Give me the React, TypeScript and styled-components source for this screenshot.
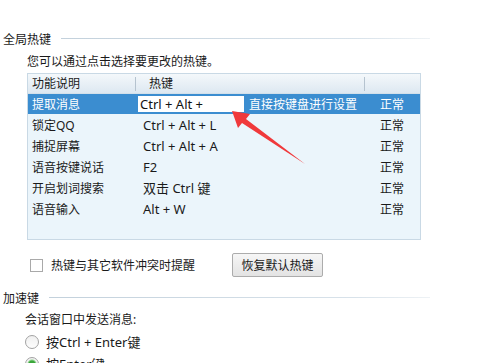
import styled, { createGlobalStyle } from "styled-components";

const GlobalStyle = createGlobalStyle`
  html, body { margin: 0; padding: 0; background: #fff; }
  body {
    width: 482px;
    height: 363px;
    overflow: hidden;
    font-family: "Noto Sans", "Noto Sans CJK SC", sans-serif;
    font-size: 12px;
    color: #1a1a1a;
  }
`;

const Page = styled.div`
  position: relative;
  width: 482px;
  height: 363px;
  padding: 31px 0 0 3px;
  box-sizing: border-box;
`;

const SectionTitle = styled.div<{ $top?: number }>`
  display: flex;
  align-items: center;
  gap: 10px;
  height: 18px;
  margin-top: ${(p) => p.$top ?? 0}px;
  margin-right: 52px;
  line-height: 18px;
`;

const SectionLine = styled.div`
  flex: 1;
  height: 1px;
  margin-top: -4px;
  background: linear-gradient(to right, #c3d1dc, #d8e2ea 80%, #eef2f5);
`;

const Indent = styled.div<{ $left: number }>`
  padding-left: ${(p) => p.$left}px;
`;

const Hint = styled.div`
  height: 18px;
  line-height: 18px;
  margin-top: 4px;
`;

const Table = styled.div`
  width: 394px;
  height: 167px;
  margin-top: 2px;
  box-sizing: border-box;
  border: 1px solid #c9d9e5;
  background: #ebf5fb;
`;

const Grid = styled.div`
  display: grid;
  grid-template-columns: 108px 229px 1fr;
`;

const HeaderRow = styled(Grid)`
  height: 19px;
  background: linear-gradient(to bottom, #f4f8fb, #dde8f1);
  border-bottom: 1px solid #d3e0ea;
  line-height: 19px;
`;

const HeaderCell = styled.div<{ $pad: number; $divider?: boolean }>`
  padding-left: ${(p) => p.$pad}px;
  position: relative;
  &::after {
    content: "";
    display: ${(p) => (p.$divider ? "block" : "none")};
    position: absolute;
    right: 0;
    top: 3px;
    width: 1px;
    height: 14px;
    background: #b5c3cf;
  }
`;

const Row = styled(Grid)<{ $selected?: boolean }>`
  height: ${(p) => (p.$selected ? 20 : 21)}px;
  align-items: center;
  background: ${(p) => (p.$selected ? "#3b8dd0" : "transparent")};
  color: ${(p) => (p.$selected ? "#fff" : "#1a1a1a")};
`;

const Cell = styled.div<{ $pad: number; $latin?: boolean }>`
  padding-left: ${(p) => p.$pad}px;
  white-space: nowrap;
  font-size: ${(p) => (p.$latin ? 13 : 12)}px;
`;

const KeyCell = styled.div`
  display: flex;
  align-items: center;
  gap: 5px;
  white-space: nowrap;
`;

const KeyInput = styled.div`
  width: 104px;
  height: 16px;
  margin-left: 2px;
  padding-left: 2px;
  background: #fff;
  color: #111;
  font-size: 13px;
  line-height: 16px;
`;

const OptionRow = styled.div`
  display: flex;
  align-items: center;
  margin-top: 12px;
  height: 26px;
`;

const Checkbox = styled.span`
  width: 11px;
  height: 11px;
  margin: 0 8px 0 3px;
  border: 1px solid #a9a9a9;
  background: #fff;
`;

const OptionLabel = styled.span`
  width: 181px;
`;

const Button = styled.button`
  height: 24px;
  width: 91px;
  padding: 0;
  font: inherit;
  color: #1a1a1a;
  border: 1px solid #acacac;
  border-radius: 2px;
  background: linear-gradient(to bottom, #f6f6f6, #e3e3e3);
`;

const Label = styled.div`
  height: 20px;
  line-height: 20px;
  margin-top: 2px;
`;

const RadioRow = styled.div`
  display: flex;
  align-items: center;
  gap: 7px;
  height: 21px;
  margin-top: 1px;
`;

const Radio = styled.span<{ $checked?: boolean }>`
  width: 12px;
  height: 12px;
  border-radius: 50%;
  border: 1px solid #a3a3a3;
  background: ${(p) =>
    p.$checked
      ? "radial-gradient(circle, #3aa63a 0 3px, #8fd28f 4px, #f3f3f3 5px)"
      : "linear-gradient(to bottom, #f0f0f0, #fdfdfd)"};
`;

const RadioText = styled.span`
  font-size: 13px;
`;

const Arrow = styled.svg`
  position: absolute;
  left: 0;
  top: 0;
  pointer-events: none;
`;

const rows = [
  { name: "锁定QQ", key: "Ctrl + Alt + L" },
  { name: "捕捉屏幕", key: "Ctrl + Alt + A" },
  { name: "语音按键说话", key: "F2" },
  { name: "开启划词搜索", key: "双击 Ctrl 键" },
  { name: "语音输入", key: "Alt + W" },
];

export default function App() {
  return (
    <>
      <GlobalStyle />
      <Page>
        <SectionTitle>
          全局热键
          <SectionLine />
        </SectionTitle>
        <Indent $left={24}>
          <Hint>您可以通过点击选择要更改的热键。</Hint>
          <Table>
            <HeaderRow>
              <HeaderCell $pad={4} $divider>功能说明</HeaderCell>
              <HeaderCell $pad={13} $divider>热键</HeaderCell>
              <HeaderCell $pad={0} />
            </HeaderRow>
            <Row $selected>
              <Cell $pad={4}>提取消息</Cell>
              <KeyCell>
                <KeyInput>Ctrl + Alt +</KeyInput>
                直接按键盘进行设置
              </KeyCell>
              <Cell $pad={15}>正常</Cell>
            </Row>
            {rows.map((r) => (
              <Row key={r.name}>
                <Cell $pad={4}>{r.name}</Cell>
                <Cell $pad={7} $latin>{r.key}</Cell>
                <Cell $pad={15}>正常</Cell>
              </Row>
            ))}
          </Table>
          <OptionRow>
            <Checkbox />
            <OptionLabel>热键与其它软件冲突时提醒</OptionLabel>
            <Button>恢复默认热键</Button>
          </OptionRow>
        </Indent>
        <SectionTitle $top={12}>
          加速键
          <SectionLine />
        </SectionTitle>
        <Indent $left={22}>
          <Label>会话窗口中发送消息:</Label>
          <RadioRow>
            <Radio />
            <RadioText>按Ctrl + Enter键</RadioText>
          </RadioRow>
          <RadioRow>
            <Radio $checked />
            <RadioText>按Enter键</RadioText>
          </RadioRow>
        </Indent>
        <Arrow width="482" height="363" viewBox="0 0 482 363">
          <polygon
            points="232,111 250,114 246,119 305,164 242,123 238,128"
            fill="#f0393b"
          />
        </Arrow>
      </Page>
    </>
  );
}
